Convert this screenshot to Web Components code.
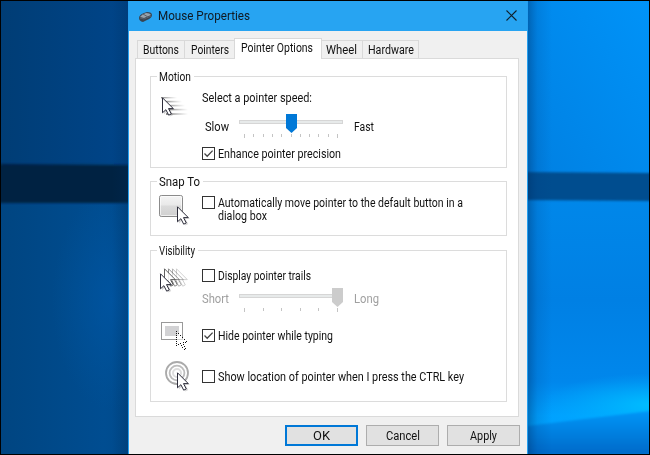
<!DOCTYPE html>
<html lang="en"><head><meta charset="utf-8"><title>Mouse Properties</title>
<style>html,body{margin:0;width:650px;height:455px;overflow:hidden;background:#000;font:12px/13px Roboto,"Noto Sans",sans-serif;color:#111}</style></head>
<body><mouse-desktop></mouse-desktop>
<script>
const define=(name,html,after)=>customElements.define(name,class extends HTMLElement{
  connectedCallback(){ if(this.shadowRoot)return; this.attachShadow({mode:'open'}).innerHTML=typeof html==='function'?html(this):html; if(after)after(this); }
});

// Text condensed to a given advance width
define('ui-label',el=>`<style>:host{display:block;flex:none;width:${el.getAttribute('w')}px;height:13px;white-space:nowrap}span{display:inline-block;transform-origin:0 0}</style><span><slot></slot></span>`,
  el=>{const s=el.shadowRoot.querySelector('span');s.style.transform=`scaleX(${(+el.getAttribute('w')/s.getBoundingClientRect().width).toFixed(4)})`;});

define('ui-tab',el=>`<style>:host{display:block;box-sizing:border-box;height:18px;width:${el.getAttribute('width')}px;background:#f0f0f0;border:1px solid #d9d9d9;border-bottom:0;margin-right:-1px;padding:3px 0 0 ${el.getAttribute('pad')}px}
:host([active]){height:21px;background:#fff;margin-bottom:-1px;position:relative;z-index:1}</style><slot></slot>`);

define('ui-group',el=>`<style>:host{display:block;box-sizing:border-box;width:357px;border:1px solid #dcdcdc;height:${el.getAttribute('h')}px}
.legend{width:max-content;background:#fff;padding:1px 3px 0 2px;margin:-7px 0 0 6px;height:13px}</style><div class="legend"><slot name="legend"></slot></div><slot></slot>`);

define('ui-row',el=>`<style>:host{display:flex;align-items:flex-start;height:${el.getAttribute('h')}px}</style><slot></slot>`);

define('ui-check',el=>`<style>:host{display:flex;gap:3px}svg{display:block;flex:none}div{padding-top:1px}</style>
<svg width="13" height="13"><rect x=".5" y=".5" width="12" height="12" fill="#fff" stroke="#333"/>${el.hasAttribute('checked')?'<path d="M2.5 6.5 5.2 9.2 10.6 3.6" fill="none" stroke="#444" stroke-width="1.3"/>':''}</svg><div><slot></slot></div>`);

define('ui-slider',el=>{
  const n=+el.getAttribute('steps'),v=+el.getAttribute('value'),off=el.hasAttribute('disabled');
  let t='';for(let i=0;i<=n;i++){const x=Math.round(5+i*93/n);t+=`<path d="M${x+.5} 20v${i===0||i===n?4:3}" stroke="#c4c4c4"/>`;}
  const x=Math.round(93*v/n);
  return `<style>:host{display:block;width:104px;height:24px}svg{display:block}</style><svg width="105" height="24"><rect x=".5" y="6.5" width="103" height="3" fill="#e7eaea" stroke="#d6d6d6"/>${t}<path d="M${x} 0h11v14l-5.5 5-5.5-5z" fill="${off?'#ccc':'#0078d7'}"/></svg>`;});

define('ui-button',el=>`<style>:host{display:flex;justify-content:center;box-sizing:border-box;width:73px;height:21px;border:1px solid #adadad;background:#e1e1e1;padding-top:4px}
:host([primary]){border:2px solid #0078d7;padding-top:3px}</style><slot></slot>`);

const arrow=(x,y)=>`<g transform="translate(${x} ${y})"><path d="M2 3v14.5l3.5-3.4 3 5.4 2.7-1.4-2.7-5.2h4.5z" fill="#777" opacity=".28"/><path d="M.5.8v15l3.4-3.1 2.8 5.5 2.6-1.3-2.8-5.3h4.8z" fill="#fff" stroke="#2c2c3a"/></g>`;
const ghost=(x,y,o)=>`<path transform="translate(${x} ${y})" opacity="${o}" d="M.5.8v15l3.4-3.1 2.8 5.5 2.6-1.3-2.8-5.3h4.8z" fill="#fff" stroke="#444"/>`;
// Single-pixel dots along the pointer outline
const dots=[[0,0],[0,2],[0,4],[0,6],[0,8],[0,10],[0,12],[0,14],[2,2],[4,4],[6,6],[8,8],[10,10],[9,11],[7,11],[2,13],[4,12],[5,14],[6,16],[8,18],[7,13],[8,15],[9,17]];
const art={
 speed:`<defs><linearGradient id="f"><stop offset="0" stop-color="#888"/><stop offset="1" stop-color="#aaa" stop-opacity="0"/></linearGradient></defs>
  <g fill="url(#f)"><rect x="3" y="1" width="16" height="1.4"/><rect x="7" y="4.8" width="17" height="1.6"/><rect x="9" y="8.8" width="18" height="1.6"/><rect x="11" y="12.8" width="19" height="1.6"/><rect x="8" y="17" width="22" height="2"/></g>${arrow(4,1)}`,
 snap:`<defs><linearGradient id="b" x2="0" y2="1"><stop stop-color="#f5f5f5"/><stop offset=".45" stop-color="#e9e9e9"/><stop offset=".5" stop-color="#dbdbdb"/><stop offset="1" stop-color="#d0d0d0"/></linearGradient></defs><rect x=".5" y=".5" width="23" height="21" rx="1.8" fill="url(#b)" stroke="#8b8b8b"/><rect x="1.5" y="1.5" width="21" height="19" rx="1" fill="none" stroke="#fff" opacity=".65"/>${arrow(18,11)}`,
 trails:ghost(17,0,.25)+ghost(13,0,.4)+ghost(9,0,.6)+ghost(5,0,.85)+arrow(1,5),
 hide:`<rect x=".5" y=".5" width="21" height="17" fill="#fff" stroke="#999"/><rect x="4" y="4" width="14" height="10" fill="#d2d2d4"/><path d="M16 10v14l3-2 3 5 2-1-2-5h4z" fill="#fff" fill-opacity=".6"/>${dots.map(([x,y])=>`<rect x="${x+15}" y="${y+9}" width="1" height="1" fill="#111"/>`).join('')}`,
 locate:`<g fill="none"><circle cx="12" cy="12" r="11" stroke="#aaa" stroke-width="1.8"/><circle cx="12" cy="12" r="7.4" stroke="#bcbcbc" stroke-width="1.8"/><circle cx="12" cy="12" r="4" stroke="#ddd" stroke-width="2"/></g>${arrow(12,11)}`
};
define('ui-art',el=>`<style>:host{display:block;flex:none;width:30px;height:0}svg{display:block;overflow:visible}</style><svg width="30" height="30">${art[el.getAttribute('kind')]}</svg>`);

define('mouse-wallpaper',`<style>:host{display:block;width:648px;height:453px}svg{display:block}</style>
<svg width="648" height="453" viewBox="1 1 648 453"><defs>
<linearGradient id="l" x2="1" y2="0"><stop stop-color="#003d75"/><stop offset="1" stop-color="#00458a"/></linearGradient>
<linearGradient id="l2" x2="1" y2="0"><stop stop-color="#004581"/><stop offset=".8" stop-color="#004d91"/><stop offset="1" stop-color="#004a8c"/></linearGradient>
<linearGradient id="r" x1="0" y1="1" x2="1" y2="0"><stop stop-color="#0080e2"/><stop offset="1" stop-color="#0093f8"/></linearGradient>
<linearGradient id="r2" x2="0" y2="1"><stop stop-color="#0089eb"/><stop offset=".45" stop-color="#0080e4"/><stop offset=".74" stop-color="#0087ec"/><stop offset=".86" stop-color="#00a1ff"/><stop offset=".92" stop-color="#00a4ff"/></linearGradient>
<linearGradient id="fl" x2="0" y2="1"><stop stop-color="#0096f7"/><stop offset="1" stop-color="#0069c8"/></linearGradient>
<linearGradient id="sh" x2="1" y2="0"><stop stop-color="#002c60" stop-opacity=".4"/><stop offset=".4" stop-color="#003b80" stop-opacity=".14"/><stop offset="1" stop-color="#003b80" stop-opacity="0"/></linearGradient>
<linearGradient id="sl"><stop stop-color="#002c58" stop-opacity="0"/><stop offset="1" stop-color="#002c58" stop-opacity=".3"/></linearGradient>
<radialGradient id="g"><stop stop-color="#00bfff"/><stop offset="1" stop-color="#00b0ff" stop-opacity="0"/></radialGradient>
<radialGradient id="d"><stop stop-color="#0056a5" stop-opacity=".7"/><stop offset="1" stop-color="#0056a0" stop-opacity="0"/></radialGradient>
<filter id="s" x="-5%" y="-20%" width="110%" height="140%"><feGaussianBlur stdDeviation="1"/></filter></defs>
<rect width="130" height="166" fill="url(#l)"/><rect y="165" width="130" height="290" fill="url(#l2)"/><ellipse cx="112" cy="300" rx="60" ry="110" fill="url(#d)"/>
<path d="M-5 164 135 165v38H-5z" fill="#002043" filter="url(#s)"/>
<rect x="527" width="123" height="174" fill="url(#r)"/><rect x="527" y="173" width="123" height="282" fill="url(#r2)"/>
<ellipse cx="655" cy="405" rx="115" ry="32" fill="url(#g)"/><path d="M527 426 650 411v44H527z" fill="url(#fl)" filter="url(#s)"/>
<path d="M520 172 655 173v28l-135-1z" fill="#004d8f" filter="url(#s)"/>
<rect x="528" width="24" height="455" fill="url(#sh)"/><rect x="112" width="16" height="455" fill="url(#sl)"/></svg>`);

define('mouse-dialog',`<style>
:host{display:flex;flex-direction:column;box-sizing:border-box;width:400px;height:453px;background:#f0f0f0;border:solid #26a0f0;border-width:0 1px}
header{display:flex;height:30px;background:#27a4f2;color:#101820}
header ui-label{margin:9px 0 0 5px}.mouse{margin:9px 0 0 9px}.x{margin:9px 10px 0 auto}
nav{display:flex;align-items:flex-end;height:20px;padding:7px 0 0 8px}
main{box-sizing:border-box;width:384px;height:359px;margin-left:6px;background:#fff;border:1px solid #dadada;padding:17px 0 0 14px}
.gap{height:13px}.gap2{height:14px}footer{display:flex;gap:8px;padding:8px 0 0 156px}
.muted{color:#a0a0a0}</style>
<header><svg class="mouse" width="15" height="14"><path d="M1 8Q1 5 6 3L9 2q5 0 5 3 0 3-5 5L5 12Q1 11 1 8Z" fill="#394450"/><path d="M2 7Q4 4 8 3q4 0 5 2L6 8Z" fill="#96a2ab"/><path d="m5 4 5 3M2 8l4 1 7-3" stroke="#59636c" fill="none"/></svg><ui-label w="92">Mouse Properties</ui-label>
<svg class="x" width="11" height="11"><path d="m.5.5 10 10m0-10-10 10" stroke="#10202c" stroke-width="1.1"/></svg></header>
<nav><ui-tab width="48" pad="5"><ui-label w="36">Buttons</ui-label></ui-tab><ui-tab width="51" pad="6"><ui-label w="38">Pointers</ui-label></ui-tab><ui-tab active width="88" pad="6"><ui-label w="72">Pointer Options</ui-label></ui-tab><ui-tab width="42" pad="4"><ui-label w="31">Wheel</ui-label></ui-tab><ui-tab width="57" pad="5"><ui-label w="46">Hardware</ui-label></ui-tab></nav>
<main>
<ui-group h="92"><ui-label slot="legend" w="32">Motion</ui-label>
 <ui-row h="28" style="padding-top:8px"><ui-art kind="speed" style="margin:4px 0 0 7px"></ui-art><ui-label w="110" style="margin:0 0 0 14px">Select a pointer speed:</ui-label></ui-row>
 <ui-row h="28" style="margin-top:-6px;padding-left:54px"><ui-label w="24" style="margin-top:7px">Slow</ui-label><ui-slider steps="10" value="5" style="margin:0 11px 0 10px"></ui-slider><ui-label w="20" style="margin-top:7px">Fast</ui-label></ui-row>
 <ui-row h="18" style="padding:5px 0 0 51px"><ui-check checked><ui-label w="123">Enhance pointer precision</ui-label></ui-check></ui-row>
</ui-group><div class="gap"></div>
<ui-group h="55"><ui-label slot="legend" w="41">Snap To</ui-label>
 <ui-row h="34" style="padding-top:7px"><ui-art kind="snap" style="margin:-1px 0 0 8px"></ui-art><ui-check style="margin-left:13px"><ui-label w="245">Automatically move pointer to the default button in a</ui-label><ui-label w="49">dialog box</ui-label></ui-check></ui-row>
</ui-group><div class="gap2"></div>
<ui-group h="152"><ui-label slot="legend" w="36">Visibility</ui-label>
 <ui-row h="19" style="padding-top:11px"><ui-art kind="trails" style="margin:-1px 0 0 8px"></ui-art><ui-check style="margin-left:13px"><ui-label w="93">Display pointer trails</ui-label></ui-check></ui-row>
 <ui-row h="41" style="padding-left:51px"><ui-label class="muted" w="27" style="margin-top:5px">Short</ui-label><ui-slider disabled steps="5" value="5" style="margin:0 11px 0 10px"></ui-slider><ui-label class="muted" w="25" style="margin-top:5px">Long</ui-label></ui-row>
 <ui-row h="41"><ui-art kind="hide" style="margin:-7px 0 0 10px"></ui-art><ui-check checked style="margin-left:11px"><ui-label w="115">Hide pointer while typing</ui-label></ui-check></ui-row>
 <ui-row h="20"><ui-art kind="locate" style="margin:-9px 0 0 14px"></ui-art><ui-check style="margin-left:7px"><ui-label w="246">Show location of pointer when I press the CTRL key</ui-label></ui-check></ui-row>
</ui-group></main>
<footer><ui-button primary><ui-label w="17">OK</ui-label></ui-button><ui-button><ui-label w="34">Cancel</ui-label></ui-button><ui-button><ui-label w="27">Apply</ui-label></ui-button></footer>`);

define('mouse-desktop',`<style>:host{display:grid;width:648px;height:453px;padding:1px}mouse-wallpaper,mouse-dialog{grid-area:1/1}mouse-dialog{margin-left:127px}</style><mouse-wallpaper></mouse-wallpaper><mouse-dialog></mouse-dialog>`);
</script></body></html>
